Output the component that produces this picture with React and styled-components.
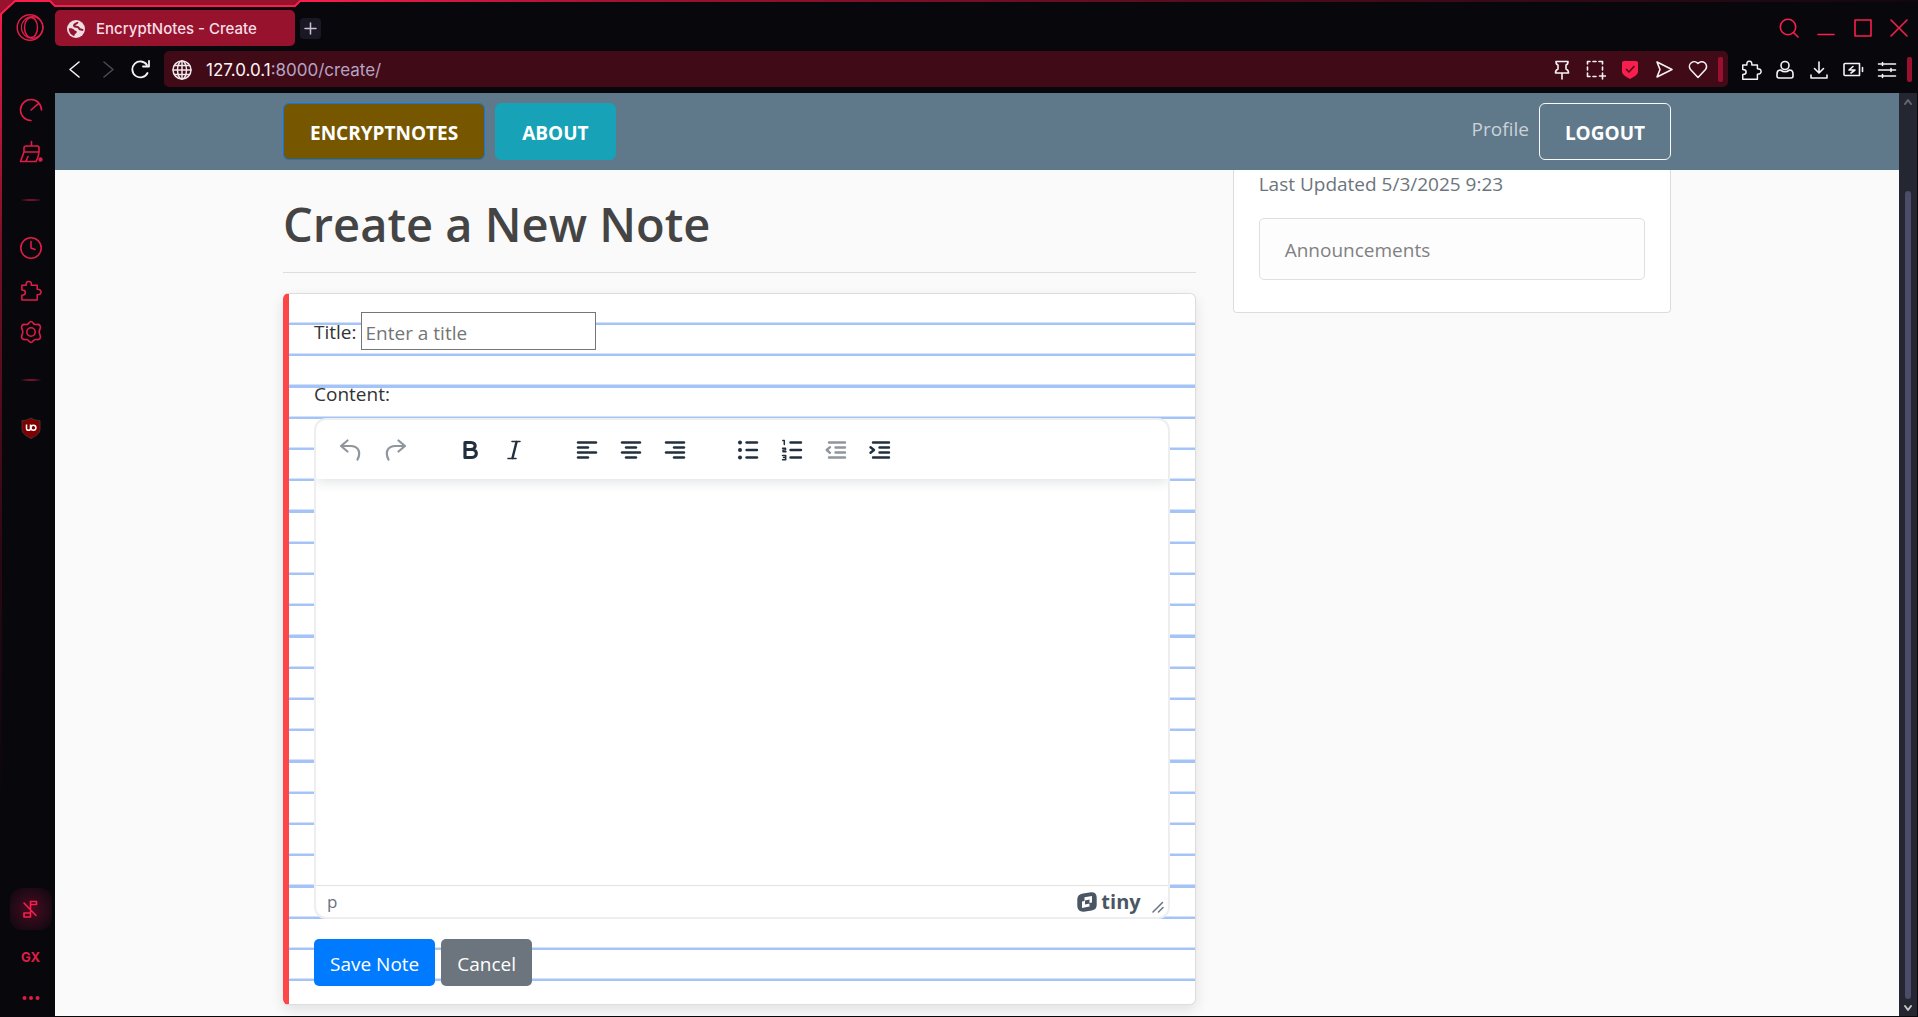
import React from "react";
import styled, { createGlobalStyle, css } from "styled-components";

const pageFont = '"Open Sans", "Noto Sans", sans-serif';
const chromeFont = 'Inter, "Liberation Sans", sans-serif';
const red = "#fa1e4e";

const Global = createGlobalStyle`
  *, *::before, *::after { box-sizing: border-box; }
  html, body, #root { height: 100%; }
  body { margin: 0; background: #07070c; font-family: ${pageFont}; }
  button, input { font: inherit; }
  button { margin: 0; padding: 0; border: 0; background: none; color: inherit; }
  svg { display: block; flex: none; }
`;

/* ---------- browser frame ---------- */

const Frame = styled.div`
  position: relative;
  display: flex;
  height: 100vh;
  overflow: hidden;
  padding: 0 1px 1px 0;
  background: #07070c;
`;

const Edge = styled.svg`
  position: absolute;
  top: 0;
  left: 0;
  pointer-events: none;
`;

const TopGlow = styled.div`
  position: absolute;
  top: 0;
  left: 299px;
  right: 0;
  height: 2px;
  background: linear-gradient(90deg, ${red}, #a01231 20%, #4d0b1c 60%, #12070e);
`;

const SideRail = styled.nav`
  width: 55px;
  flex: none;
  display: flex;
  flex-direction: column;
  align-items: center;
  padding: 13px 0 4px 4px;
  border-left: 2px solid;
  border-image: linear-gradient(${red}, #7a1028 24%, #2a0813 55%, #07070c 80%) 1;
  color: #e01c48;
`;

const RailButton = styled.button`
  display: grid;
  place-items: center;
  width: 42px;
  height: ${(p) => p.$h || 42}px;
  color: inherit;
  ${(p) => p.$glow && css`
    border-radius: 12px;
    color: ${red};
    background: radial-gradient(circle, #4a0b20 0%, #260a17 55%, #0b070d 100%);
  `}
`;

const Logo = styled.div`
  height: 76px;
`;

const RailDivider = styled.hr`
  width: 24px;
  height: 2px;
  margin: 26px 0;
  border: 0;
  background: radial-gradient(closest-side, #e01c48, #5e1024 60%, transparent);
`;

const RailSpacer = styled.div`
  flex: 1;
`;

const GxLabel = styled.span`
  font: 700 13px/16px ${chromeFont};
`;

const Main = styled.div`
  flex: 1;
  min-width: 0;
  display: flex;
  flex-direction: column;
`;

const TabStrip = styled.header`
  display: flex;
  align-items: center;
  height: 51px;
  flex: none;
  padding: 5px 9px 0 0;
  gap: 5px;
`;

const Tab = styled.button`
  display: flex;
  align-items: center;
  gap: 11px;
  width: 240px;
  height: 36px;
  padding: 1px 12px 0;
  border-radius: 5px;
  background: #96122d;
  color: #f6dfe6;
  font: 500 15px/20px ${chromeFont};
`;

const NewTab = styled.button`
  display: grid;
  place-items: center;
  width: 21px;
  height: 21px;
  border-radius: 4px;
  background: #1b1826;
  color: #c9c0d6;
`;

const WindowControls = styled.div`
  display: flex;
  align-items: center;
  gap: 17px;
  margin-left: auto;
  color: ${red};
`;

const AddressRow = styled.div`
  display: flex;
  align-items: center;
  height: 42px;
  flex: none;
  padding: 0 5px 6px 3px;
`;

const NavButton = styled.button`
  display: grid;
  place-items: center;
  width: 33px;
  height: 36px;
  color: ${(p) => (p.$dim ? "#4c4a52" : "#f4f2f6")};
`;

const UrlBox = styled.div`
  flex: 1;
  display: flex;
  align-items: center;
  height: 36px;
  margin-left: 7px;
  padding: 1px 5px 0 8px;
  border-radius: 5px;
  background: #410a17;
  color: #efe6ea;
`;

const Url = styled.a`
  flex: 1;
  margin-left: 14px;
  color: #b5a4c4;
  font: 400 17px/24px ${chromeFont};
  text-decoration: none;
`;

const Host = styled.span`
  color: #fbf5f7;
`;

const IconRow = styled.div`
  display: flex;
  align-items: center;
  gap: 10px;
  color: #f4f2f6;
`;

const ExtensionRow = styled(IconRow)`
  padding: 1px 0 0 11px;
`;

const IconButton = styled.button`
  display: grid;
  place-items: center;
  width: 24px;
  height: 24px;
`;

const Grip = styled.span`
  width: 5px;
  height: 25px;
  margin-left: -2px;
  border-radius: 2px;
  background: #9a1130;
`;

/* ---------- web page ---------- */

const Viewport = styled.div`
  flex: 1;
  min-height: 0;
  display: flex;
`;

const Page = styled.div`
  flex: 1;
  min-width: 0;
  display: flex;
  flex-direction: column;
  overflow: hidden;
  background: #fafafa;
  color: #333333;
  font-size: 19px;
  line-height: 30px;
`;

const ScrollTrack = styled.div`
  width: 18px;
  flex: none;
  display: flex;
  flex-direction: column;
  align-items: center;
  justify-content: space-between;
  padding: 5px 0 4px;
  background: #242731;
`;

const ScrollArrow = styled.span`
  color: ${(p) => (p.$active ? "#c4c4c6" : "#66676c")};
`;

const ScrollThumb = styled.div`
  width: 6px;
  flex: 1;
  margin: 85px 0 5px;
  border-radius: 3px;
  background: #4a4c68;
`;

const NavBar = styled.header`
  flex: none;
  padding: 10px 0;
  background: #5f788a;
`;

const Container = styled.div`
  width: 100%;
  max-width: 1426px;
  margin: 0 auto;
  padding: 0 19px;
  display: flex;
`;

const navItem = css`
  display: flex;
  align-items: center;
  height: 57px;
  padding: 2px 25px 0;
  border: 1px solid;
  border-radius: 6px;
  color: #ffffff;
  font-size: 19px;
  font-weight: 700;
  line-height: 28px;
  text-decoration: none;
  text-transform: uppercase;
`;

const NavButtonLink = styled.a`
  ${navItem}
  padding: 2px 26px 0;
  margin-right: 10px;
  background: ${(p) => p.$bg};
  border-color: ${(p) => p.$edge};
`;

const ProfileLink = styled.a`
  margin: 11px 10px 0 auto;
  color: #cbd2d8;
  text-decoration: none;
`;

const LogoutButton = styled.button`
  ${navItem}
  border-color: #f8f9fa;
`;

const Columns = styled(Container)`
  justify-content: space-between;
  gap: 37px;
`;

const Primary = styled.main`
  flex: 912 1 0;
  min-width: 0;
`;

const Sidebar = styled.aside`
  flex: 438 1 0;
  min-width: 0;
`;

const Title = styled.h1`
  margin: 0 0 20px;
  padding: 24px 0 18px;
  border-bottom: 1px solid #dedede;
  color: #444444;
  font-size: 47px;
  font-weight: 600;
  line-height: 60px;
`;

const NotePaper = styled.form`
  min-height: 712px;
  padding: 18px 25px;
  border: 1px solid #dddddd;
  border-left: 6px solid #ff4646;
  border-radius: 6px;
  background-color: #ffffff;
  background-image: repeating-linear-gradient(
    transparent 0 28px,
    #d3e2fb 28px 29px,
    #a4c4f8 29px 31.25px
  );
  box-shadow: 0 5px 13px rgba(0, 0, 0, 0.1);
`;

const Field = styled.div`
  display: flex;
  align-items: center;
  gap: 4px;
  margin-bottom: 27px;
`;

const TitleInput = styled.input`
  width: 235px;
  height: 38px;
  padding: 3px 4px 0;
  border: 1px solid #767676;
  border-radius: 0;
  background: #ffffff;
  &::placeholder { color: #757575; opacity: 1; }
`;

const FieldLabel = styled.label`
  display: block;
  padding-top: 2px;
`;

const Editor = styled.div`
  display: flex;
  flex-direction: column;
  height: 501px;
  margin: 9px 0 20px;
  overflow: hidden;
  border: 2px solid #eeeeee;
  border-radius: 12px;
  background: #ffffff;
`;

const Toolbar = styled.div`
  display: flex;
  align-items: center;
  gap: 29px;
  flex: none;
  height: 59px;
  padding: 0 11px;
  box-shadow: 0 2px 12px rgba(34, 47, 62, 0.16);
  color: #222f3e;
`;

const ToolGroup = styled.div`
  display: flex;
`;

const Tool = styled.button`
  display: grid;
  place-items: center;
  width: ${(p) => p.$w || 44}px;
  height: 35px;
  opacity: ${(p) => (p.disabled ? 0.5 : 1)};
`;

const Writing = styled.textarea`
  flex: 1;
  padding: 20px;
  border: 0;
  outline: 0;
  resize: none;
  font: inherit;
  background: transparent;
`;

const StatusBar = styled.div`
  display: flex;
  align-items: center;
  flex: none;
  height: 32px;
  padding: 0 4px 0 11px;
  border-top: 1px solid #e3e3e3;
  color: #697380;
  font-size: 17px;
`;

const TinyMark = styled.a`
  display: flex;
  align-items: center;
  gap: 4px;
  margin-left: auto;
  color: #4b5664;
  font: 700 20px/24px ${pageFont};
  text-decoration: none;
`;

const Resize = styled.span`
  align-self: flex-end;
  margin: 0 0 4px 11px;
`;

const Actions = styled.div`
  display: flex;
  gap: 6px;
`;

const Action = styled.button`
  height: 47px;
  padding: 3px 16px 0;
  border-radius: 5px;
  background: ${(p) => p.$bg};
  color: #ffffff;
`;

const InfoCard = styled.section`
  padding: 0 25px 32px;
  border: 1px solid #dddddd;
  border-top: 0;
  border-radius: 0 0 4px 4px;
  background: #ffffff;
  color: #6c757d;
`;

const Updated = styled.p`
  margin: 0 0 20px;
  line-height: 28px;
`;

const List = styled.ul`
  margin: 0;
  padding: 0;
  list-style: none;
`;

const ListItem = styled.li`
  padding: 16px 25px 14px;
  border: 1px solid #dfdfdf;
  border-radius: 5px;
  background: #fdfdfe;
  color: #818182;
`;

/* ---------- icons ---------- */

const Icon = ({ size = 22, box = 24, sw = 1.6, children }) => (
  <svg width={size} height={size} viewBox={`0 0 ${box} ${box}`} fill="none" stroke="currentColor"
    strokeWidth={sw} strokeLinecap="round" strokeLinejoin="round" aria-hidden="true">
    {children}
  </svg>
);

const Puzzle = ({ size }) => (
  <Icon size={size}>
    <path d="M3 6.5h4.500c0-2-.2-4 2.700-4s2.700 2 2.700 4H19v4.200c1.800 0 4 .2 4 2.900s-2.200 2.900-4 2.900V22H3v-5c2 0 3.700-.7 3.700-2.800S5 11.400 3 11.400z" />
  </Icon>
);

const lineSets = {
  left: [[2, 22], [2, 14], [2, 22], [2, 14]],
  center: [[2, 22], [6, 18], [2, 22], [6, 18]],
  right: [[2, 22], [10, 22], [2, 22], [10, 22]],
};

const AlignIcon = ({ kind }) => (
  <Icon size={24} sw={2.4}>
    {lineSets[kind].map(([a, b], i) => (
      <path key={i} d={`M${a + 1} ${4.5 + i * 5}H${b - 1}`} />
    ))}
  </Icon>
);

const BulletIcon = () => (
  <Icon size={24} sw={2.4}>
    {[4.5, 12, 19.5].map((y) => (
      <g key={y}>
        <circle cx="4" cy={y} r="2" fill="currentColor" stroke="none" />
        <path d={`M10.5 ${y}H21`} />
      </g>
    ))}
  </Icon>
);

const NumberIcon = () => (
  <Icon size={24} sw={2.4}>
    <path d="M10.5 4.5H21M10.5 12H21M10.5 19.5H21" />
    <path strokeWidth="1.5" d="M2.8 2.5h1.500v4M2.500 10.200h3v1.800h-2.500v1.800h3M2.500 17.500h3.200v4.200H2.500M3.500 19.600h2" />
  </Icon>
);

const IndentIcon = ({ out }) => (
  <Icon size={24} sw={2.4}>
    <path d="M5 4.5H21M11.5 9.500H21M11.500 14.500H21M5 19.500H21" />
    <path d={out ? "M6 9.2L2.700 12L6 14.800" : "M2.500 9.200L6 12L2.500 14.800"} />
  </Icon>
);

function Rail() {
  return (
    <SideRail aria-label="Browser sidebar">
      <Logo>
        <Icon size={30} box={30} sw={1.5}>
          <circle cx="14" cy="14.500" r="12.800" />
          <circle cx="16.200" cy="14.500" r="10.800" strokeWidth="1.200" />
          <ellipse cx="15" cy="14.500" rx="6.500" ry="10" />
        </Icon>
      </Logo>
      <RailButton aria-label="Limiter">
        <Icon size={24}><path d="M12 22.500A10.500 10.500 0 1 1 22.500 12M12 12L20 5.200" /></Icon>
      </RailButton>
      <RailButton aria-label="Cleaner">
        <Icon size={24}>
          <path d="M12.500 1.500V6M7 6h11.500q1.500 0 1.500 1.500V12H5V8q0-2 2-2zM5 12L1.500 21.500h15.500q2.500-4 3-9.500M7 21l2-4.500" />
          <circle cx="21.500" cy="19.500" r="1.400" fill="currentColor" />
        </Icon>
      </RailButton>
      <RailDivider />
      <RailButton aria-label="History">
        <Icon size={24}><circle cx="12" cy="12" r="10.200" /><path d="M12 5.500V12l4 1.500" /></Icon>
      </RailButton>
      <RailButton aria-label="Extensions"><Puzzle size={23} /></RailButton>
      <RailButton aria-label="Settings">
        <Icon size={24}>
          <path d="M12 1.500C14 1.500 14 4 16 4.500C18 4.800 19.500 3.500 21 5.500C22.500 8 20.200 9.500 20.200 12C20.200 14.500 22.500 16 21 18.500C19.500 20.500 18 19.200 16 19.500C14 20 14 22.500 12 22.500C10 22.500 10 20 8 19.500C6 19.200 4.500 20.500 3 18.500C1.500 16 3.800 14.500 3.800 12C3.800 9.500 1.500 8 3 5.500C4.500 3.500 6 4.800 8 4.500C10 4 10 1.500 12 1.500Z" />
          <circle cx="12" cy="12" r="4.200" />
        </Icon>
      </RailButton>
      <RailDivider />
      <RailButton aria-label="uBlock Origin">
        <svg width="20" height="22" viewBox="0 0 20 22" aria-hidden="true">
          <path d="M10 1C7 3 4 3.500 1 3.500V12c0 4.500 4 7 9 9.500 5-2.500 9-5 9-9.500V3.500C16 3.500 13 3 10 1z" fill="#800000" stroke="#4a3034" />
          <path d="M5.500 7.500v4q0 1.800 2 1.800t2-1.800v-4" fill="none" stroke="#fff" strokeWidth="1.500" />
          <circle cx="12.400" cy="10.700" r="2.500" fill="none" stroke="#fff" strokeWidth="1.500" />
        </svg>
      </RailButton>
      <RailSpacer />
      <RailButton aria-label="Background music off" $glow>
        <Icon size={20} box={20}>
          <path d="M9.500 13V2.500h6v3h-6M9.500 13v5H3v-4h6.500M3 4l12 12.500" />
        </Icon>
      </RailButton>
      <RailButton aria-label="GX" $h={54}><GxLabel>GX</GxLabel></RailButton>
      <RailButton aria-label="More" $h={28}>
        <svg width="18" height="6" viewBox="0 0 18 6" fill="currentColor" aria-hidden="true">
          <circle cx="2.500" cy="3" r="2" /><circle cx="9" cy="3" r="2" /><circle cx="15.500" cy="3" r="2" />
        </svg>
      </RailButton>
    </SideRail>
  );
}

function BrowserBars() {
  return (
    <>
      <TabStrip>
        <Tab>
          <svg width="18" height="18" viewBox="0 0 18 18" aria-hidden="true">
            <circle cx="9" cy="9" r="9" fill="#eedde3" />
            <path d="M10.500 2C10.500 4 7 3.500 7 5.500S11.500 6 12 8.200s3 .3 4 2.300" fill="none" stroke="#96122d" strokeWidth="2" />
            <path d="M1.800 8.500C4 8 6 8.500 7 9.800s3 .7 2.800 2.200-2.300 1.500-2.500 4C4 15.500 1.800 12 1.800 8.500z" fill="#96122d" />
          </svg>
          EncryptNotes - Create
        </Tab>
        <NewTab aria-label="New tab"><Icon size={13} box={13} sw={1.5}><path d="M6.500 1v11M1 6.500h11" /></Icon></NewTab>
        <WindowControls>
          <button aria-label="Search"><Icon size={20} box={20}><circle cx="9" cy="9" r="7.700" /><path d="M14.500 14.500L19 19" /></Icon></button>
          <button aria-label="Minimize"><Icon size={20} box={20}><path d="M2 16.500h16" /></Icon></button>
          <button aria-label="Maximize"><Icon size={20} box={20}><path d="M2 2h16v16H2z" /></Icon></button>
          <button aria-label="Close"><Icon size={18} box={18}><path d="M1 1l16 16M17 1L1 17" /></Icon></button>
        </WindowControls>
      </TabStrip>
      <AddressRow>
        <NavButton aria-label="Back"><Icon size={18} box={18}><path d="M13 2L4 9.500l9 7.500" /></Icon></NavButton>
        <NavButton aria-label="Forward" $dim disabled><Icon size={18} box={18}><path d="M5 2l9 7.500L5 17" /></Icon></NavButton>
        <NavButton aria-label="Reload"><Icon size={20} box={20} sw={1.8}><path d="M16.500 14A8 8 0 1 1 16 6M18 2v5.500h-6" /></Icon></NavButton>
        <UrlBox>
          <Icon size={20} box={20} sw={1.5}>
            <circle cx="10" cy="10" r="9" /><ellipse cx="10" cy="10" rx="4.500" ry="9" />
            <path d="M10 1v18M1 10h18M2.500 5.500h15M2.500 14.500h15" />
          </Icon>
          <Url href="#"><Host>127.0.0.1</Host>:8000/create/</Url>
          <IconRow>
            <IconButton aria-label="Pin"><Icon size={20} box={20}><path d="M4 1.500h12q0 3-2 3.500v4q2.500 1 2.500 4h-13q0-3 2.500-4V5q-2-.5-2-3.500M10 13v6" /></Icon></IconButton>
            <IconButton aria-label="Snapshot"><Icon size={20} box={20}><path d="M1.500 4V1.500H4M7 1.500h3M13 1.500h3.500V4M1.500 7v3M16.500 7v3M1.500 13v3.500H4M7 16.500h3M16.500 13v6M13.500 16h6" /></Icon></IconButton>
            <IconButton aria-label="Ad blocker">
              <svg width="18" height="20" viewBox="0 0 18 20" aria-hidden="true"><path d="M3 1h12q2 0 2 2v9q0 3-8 7-8-4-8-7V3q0-2 2-2z" fill={red} /><path d="M5 9l3 3 5.500-6" fill="none" stroke="#410a17" strokeWidth="1.500" /></svg>
            </IconButton>
            <IconButton aria-label="Send"><Icon size={20} box={20}><path d="M3 2l15 7.500L3 17l3-7.500z" /></Icon></IconButton>
            <IconButton aria-label="Favourite"><Icon size={20} box={20}><path d="M10 17.500L2.500 9.500a4.500 4.500 0 0 1 7.500-6 4.500 4.500 0 0 1 7.500 6z" /></Icon></IconButton>
            <Grip />
          </IconRow>
        </UrlBox>
        <ExtensionRow>
          <IconButton aria-label="Extensions"><Puzzle size={22} /></IconButton>
          <IconButton aria-label="Account"><Icon size={20} box={20}><circle cx="10" cy="5.500" r="4" /><path d="M5.500 10q4.500 3.500 9 0Q18 10 18 14v2q0 2-2 2H4q-2 0-2-2v-2q0-4 3.500-4z" /></Icon></IconButton>
          <IconButton aria-label="Downloads"><Icon size={20} box={20}><path d="M10 2v10.500M5.500 8.500l4.500 4.500 4.500-4.500M2 15v3h16v-3" /></Icon></IconButton>
          <IconButton aria-label="Battery saver"><Icon size={22} box={22}><path d="M3 4.500h14.500v12H3q-1 0-1-1v-10q0-1 1-1zM20.500 8.500v4M11 7.500l-4 3.500h6l-4 3" /></Icon></IconButton>
          <IconButton aria-label="Easy setup"><Icon size={20} box={20}><path d="M1.500 4h17M1.500 10h17M1.500 16h17M5.500 2.500v3M14 8.500v3M5.500 14.500v3" /></Icon></IconButton>
          <Grip />
        </ExtensionRow>
      </AddressRow>
    </>
  );
}

function NoteEditor() {
  return (
    <Editor>
      <Toolbar role="toolbar" aria-label="Formatting">
        <ToolGroup>
          <Tool type="button" disabled $w={46} aria-label="Undo"><Icon size={24} sw={2.2}><path d="M9.500 2.500L3 8l6.500 5.500M3.500 8h9c8.500 0 10.500 7 7 13.500" /></Icon></Tool>
          <Tool type="button" disabled $w={46} aria-label="Redo"><Icon size={24} sw={2.2}><path d="M14.500 2.500L21 8l-6.500 5.500M20.500 8h-9C3 8 1 15 4.500 21.500" /></Icon></Tool>
        </ToolGroup>
        <ToolGroup>
          <Tool type="button" aria-label="Bold"><Icon size={24} sw={3.2}><path d="M7 4.500h6c6 0 5 7 0 7H7zM7 11.500h7c6 0 5.500 8 0 8H7z" /></Icon></Tool>
          <Tool type="button" aria-label="Italic"><Icon size={24} sw={1.6}><path d="M10 3.500h8M6 20.500h8" /><path strokeWidth="2.400" d="M14.500 4l-4 16" /></Icon></Tool>
        </ToolGroup>
        <ToolGroup>
          <Tool type="button" aria-label="Align left"><AlignIcon kind="left" /></Tool>
          <Tool type="button" aria-label="Align center"><AlignIcon kind="center" /></Tool>
          <Tool type="button" aria-label="Align right"><AlignIcon kind="right" /></Tool>
        </ToolGroup>
        <ToolGroup>
          <Tool type="button" aria-label="Bullet list"><BulletIcon /></Tool>
          <Tool type="button" aria-label="Numbered list"><NumberIcon /></Tool>
          <Tool type="button" disabled aria-label="Decrease indent"><IndentIcon out /></Tool>
          <Tool type="button" aria-label="Increase indent"><IndentIcon /></Tool>
        </ToolGroup>
      </Toolbar>
      <Writing id="content" />
      <StatusBar>
        p
        <TinyMark href="#">
          <svg width="20" height="20" viewBox="0 0 20 20" aria-hidden="true">
            <path d="M6 1.500L14 .3Q19.500 0 19.700 5.500V13q0 4.500-5 5.500l-8 1.200Q.5 20 .3 14V7q.2-4.700 5.700-5.500z" fill="currentColor" />
            <path d="M7.500 5.200L15 4v6.500l-2.500.4V14.500L5 16V9.500l2.500-.4zM8 8.500v4l4.500-1V7.500z" fill="#fff" fillRule="evenodd" />
          </svg>
          tiny
        </TinyMark>
        <Resize><Icon size={12} box={12} sw={1.5}><path d="M1 11L10.500 1.500M6.500 11L11 6.500" /></Icon></Resize>
      </StatusBar>
    </Editor>
  );
}

export default function App() {
  return (
    <>
      <Global />
      <Frame>
        <Rail />
        <Main>
          <BrowserBars />
          <Viewport>
            <Page>
              <NavBar>
                <Container as="nav">
                  <NavButtonLink href="#" $bg="#765700" $edge="#0b79e8">EncryptNotes</NavButtonLink>
                  <NavButtonLink href="#" $bg="#17a2b8" $edge="#17a2b8">About</NavButtonLink>
                  <ProfileLink href="#">Profile</ProfileLink>
                  <LogoutButton>Logout</LogoutButton>
                </Container>
              </NavBar>
              <Columns>
                <Primary>
                  <Title>Create a New Note</Title>
                  <NotePaper onSubmit={(e) => e.preventDefault()}>
                    <Field>
                      <FieldLabel htmlFor="title">Title:</FieldLabel>
                      <TitleInput id="title" placeholder="Enter a title" />
                    </Field>
                    <FieldLabel htmlFor="content">Content:</FieldLabel>
                    <NoteEditor />
                    <Actions>
                      <Action type="submit" $bg="#007bff">Save Note</Action>
                      <Action type="button" $bg="#6c757d">Cancel</Action>
                    </Actions>
                  </NotePaper>
                </Primary>
                <Sidebar>
                  <InfoCard>
                    <Updated>Last Updated 5/3/2025 9:23</Updated>
                    <List><ListItem>Announcements</ListItem></List>
                  </InfoCard>
                </Sidebar>
              </Columns>
            </Page>
            <ScrollTrack>
              <ScrollArrow><Icon size={8} box={8} sw={2}><path d="M1 6l3-4 3 4" /></Icon></ScrollArrow>
              <ScrollThumb />
              <ScrollArrow $active><Icon size={8} box={8} sw={2}><path d="M1 2l3 4 3-4" /></Icon></ScrollArrow>
            </ScrollTrack>
          </Viewport>
        </Main>
        <TopGlow />
        <Edge width="300" height="20" viewBox="0 0 300 20" aria-hidden="true">
          <path d="M0 0H300L295 6H55L50 1H16L1 15H0z" fill="#96122d" />
          <path d="M1 20V14L15 1H50L55 6H295L300 1" fill="none" stroke={red} strokeWidth="2" />
        </Edge>
      </Frame>
    </>
  );
}
